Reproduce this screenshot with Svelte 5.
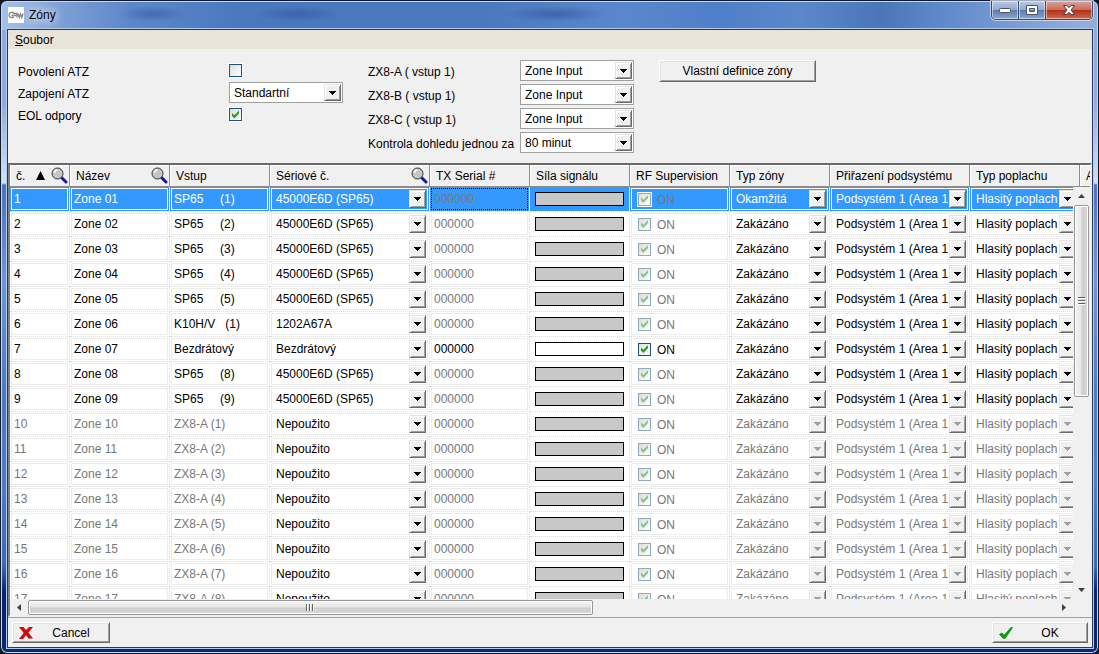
<script>
  const columns = [
    { label: 'č.', width: 60, sorted: true, search: true },
    { label: 'Název', width: 100, search: true },
    { label: 'Vstup', width: 100 },
    { label: 'Sériové č.', width: 160, search: true },
    { label: 'TX Serial #', width: 100 },
    { label: 'Síla signálu', width: 100 },
    { label: 'RF Supervision', width: 100 },
    { label: 'Typ zóny', width: 100 },
    { label: 'Přiřazení podsystému', width: 140 },
    { label: 'Typ poplachu', width: 110 },
    { label: 'A', width: 120 }
  ];

  const inputs = [
    ['SP65     (1)', '45000E6D (SP65)'],
    ['SP65     (2)', '45000E6D (SP65)'],
    ['SP65     (3)', '45000E6D (SP65)'],
    ['SP65     (4)', '45000E6D (SP65)'],
    ['SP65     (5)', '45000E6D (SP65)'],
    ['K10H/V   (1)', '1202A67A'],
    ['Bezdrátový', 'Bezdrátový'],
    ['SP65     (8)', '45000E6D (SP65)'],
    ['SP65     (9)', '45000E6D (SP65)']
  ];

  const expanders = [
    { id: 'zx8a', label: 'ZX8-A ( vstup 1)' },
    { id: 'zx8b', label: 'ZX8-B ( vstup 1)' },
    { id: 'zx8c', label: 'ZX8-C ( vstup 1)' }
  ];

  let selected = 1;
  let atzEnabled = false;
  let eolResistors = true;

  let zones = Array.from({ length: 17 }, (_, i) => {
    const no = i + 1;
    const used = i < inputs.length;
    return {
      no,
      used,
      name: 'Zone ' + String(no).padStart(2, '0'),
      input: used ? inputs[i][0] : `ZX8-A (${no - 9})`,
      serial: used ? inputs[i][1] : 'Nepoužito',
      wireless: no === 7,
      tx: '000000',
      supervised: true,
      type: no === 1 ? 'Okamžitá' : 'Zakázáno',
      area: 'Podsystém 1 (Area 1)',
      alarm: 'Hlasitý poplach'
    };
  });
</script>

{#snippet arrow()}
  <span class="arrow" aria-hidden="true">
    <svg width="7" height="4" viewBox="0 0 7 4" shape-rendering="crispEdges"><path d="M0 0h7v1H6v1H5v1H4v1H3V3H2V2H1V1H0z" /></svg>
  </span>
{/snippet}

{#snippet dropdown(id, label, value, disabled)}
  <span class="dropdown" class:off={disabled}>
    <select {id} aria-label={label} {disabled}>
      <option>{value}</option>
    </select>
    {@render arrow()}
  </span>
{/snippet}

<div class="window">
  <header class="titlebar">
    <span class="logo" aria-hidden="true">
      <svg width="16" height="16" viewBox="0 0 16 16">
        <path d="M6 5.5C3 4.6 1 6 1 8s1.800 3 4 2.600V8.500H3.500M4.500 6.500h4.500v4M6 8.500h3M10 6.500l1.300 4 1.200-3.500 1.200 3.500 1.500-4" fill="none" stroke="#858585" stroke-width="1.300" />
      </svg>
    </span>
    <h1>Zóny</h1>
    <div class="window-buttons">
      <button aria-label="Minimalizovat">
        <svg width="12" height="5" viewBox="0 0 12 5"><rect x=".5" y=".5" width="11" height="4" rx="1" fill="#fff" stroke="#4d5566" /></svg>
      </button>
      <button aria-label="Maximalizovat">
        <svg width="12" height="10" viewBox="0 0 12 10"><path fill-rule="evenodd" d="M.5.5h11v9H.5zM3.500 3.500v3h5v-3z" fill="#fff" stroke="#4d5566" /></svg>
      </button>
      <button class="close" aria-label="Zavřít">
        <svg width="12" height="10" viewBox="0 0 12 10"><path d="M.5.5h3.300L6 2.700 8.200.5h3.300L8 5l3.500 4.500H8.200L6 7.300 3.800 9.500H.5L4 5z" fill="#fff" stroke="#5b3a44" /></svg>
      </button>
    </div>
  </header>

  <div class="client">
    <nav class="menu">
      <button><u>S</u>oubor</button>
    </nav>

    <section class="settings">
      <div class="fields basic">
        <label for="atz">Povolení ATZ</label>
        <input id="atz" class="check" type="checkbox" bind:checked={atzEnabled} />
        <label for="wiring">Zapojení ATZ</label>
        {@render dropdown('wiring', undefined, 'Standartní', false)}
        <label for="eol">EOL odpory</label>
        <input id="eol" class="check" type="checkbox" bind:checked={eolResistors} />
      </div>
      <div class="fields expanders">
        {#each expanders as item (item.id)}
          <label for={item.id}>{item.label}</label>
          {@render dropdown(item.id, undefined, 'Zone Input', false)}
        {/each}
        <label for="supervision">Kontrola dohledu jednou za</label>
        {@render dropdown('supervision', undefined, '80 minut', false)}
      </div>
      <button class="push define">Vlastní definice zóny</button>
    </section>

    <div class="grid">
      <div class="viewport">
        <table>
          <colgroup>
            {#each columns as column}
              <col style="width: {column.width}px" />
            {/each}
          </colgroup>
          <thead>
            <tr>
              {#each columns as column}
                <th>
                  <div class="head">
                    <span>{column.label}</span>
                    {#if column.sorted}
                      <svg class="sort" width="9" height="9" viewBox="0 0 9 9"><path d="M4.500 0L9 9H0z" /></svg>
                    {/if}
                    {#if column.search}
                      <svg class="lens" width="17" height="17" viewBox="0 0 17 17">
                        <path d="M10.500 10.500l4.500 4.500" stroke="#1616a8" stroke-width="3" stroke-linecap="round" />
                        <circle cx="6.500" cy="6.500" r="5.500" fill="#c3c6c6" stroke="#333" />
                        <path d="M3.500 6a3 3 0 0 1 3-3" fill="none" stroke="#fff" stroke-width="1.500" />
                      </svg>
                    {/if}
                  </div>
                </th>
              {/each}
            </tr>
          </thead>
          <tbody>
            {#each zones as zone (zone.no)}
              <tr class:selected={zone.no === selected} class:unused={!zone.used} on:click={() => (selected = zone.no)}>
                <td><div class="cell">{zone.no}</div></td>
                <td><div class="cell">{zone.name}</div></td>
                <td><div class="cell">{zone.input}</div></td>
                <td><div class="cell">{@render dropdown(undefined, 'Sériové č.', zone.serial, false)}</div></td>
                <td class="tx">
                  <div class="cell"><input type="text" aria-label="TX Serial" bind:value={zone.tx} disabled={!zone.wireless} /></div>
                </td>
                <td><div class="signal" class:active={zone.wireless}></div></td>
                <td>
                  <div class="cell">
                    <label class="rf" class:off={!zone.wireless}>
                      <input class="check" type="checkbox" bind:checked={zone.supervised} disabled={!zone.wireless} />
                      <span>ON</span>
                    </label>
                  </div>
                </td>
                <td><div class="cell">{@render dropdown(undefined, 'Typ zóny', zone.type, !zone.used)}</div></td>
                <td><div class="cell">{@render dropdown(undefined, 'Přiřazení podsystému', zone.area, !zone.used)}</div></td>
                <td><div class="cell">{@render dropdown(undefined, 'Typ poplachu', zone.alarm, !zone.used)}</div></td>
                <td><div class="cell"></div></td>
              </tr>
            {/each}
          </tbody>
        </table>
      </div>

      <div class="scroll vertical" aria-hidden="true">
        <svg width="7" height="4" viewBox="0 0 7 4"><path d="M3.500 0L7 4H0z" /></svg>
        <div class="track"><div class="thumb"><i></i></div></div>
        <svg width="7" height="4" viewBox="0 0 7 4"><path d="M3.500 4L7 0H0z" /></svg>
      </div>
      <div class="scroll horizontal" aria-hidden="true">
        <svg width="4" height="7" viewBox="0 0 4 7"><path d="M0 3.500L4 0v7z" /></svg>
        <div class="track"><div class="thumb"><i></i></div></div>
        <svg width="4" height="7" viewBox="0 0 4 7"><path d="M4 3.500L0 0v7z" /></svg>
      </div>
    </div>

    <footer class="actions">
      <button class="push">
        <svg width="14" height="12" viewBox="0 0 14 12"><path d="M0 0h4.500L7 3l3-3h4L9.500 5.500 14 11.500H9.500L7 8.300 4 12H0l4.700-6z" fill="#cf0a0a" /></svg>
        <span>Cancel</span>
      </button>
      <button class="push">
        <svg width="14" height="12" viewBox="0 0 14 12"><path d="M.5 7.500l2.500-1.500 2 2.500L12 .5h1.500L6 11.500H4.500z" fill="#0a9c12" stroke="#0a9c12" /></svg>
        <span>OK</span>
      </button>
    </footer>
  </div>
</div>

<style>
  :global(body) {
    margin: 0;
    background: #10182c;
  }

  .window,
  .window button,
  .window input,
  .window select {
    font-family: 'Liberation Sans', Arial, sans-serif;
    font-size: 12px;
    color: #000;
  }

  .window {
    box-sizing: border-box;
    display: flex;
    flex-direction: column;
    height: 100vh;
    padding: 0 5px 5px 6px;
    border: 1px solid #10182c;
    border-radius: 7px;
    box-shadow: inset 0 0 0 1px #c4d8f4;
    background:
      linear-gradient(90deg, #a9c1e8 0, #7d9fd6 60px, #5c87cb 130px, #4a78bf 240px, #4a78bf 480px, #5a87cc 620px, #4f7fc9 720px, #5b88cb 800px, #4a76b8 880px, #5e89cb 940px, #93addb 1080px) top / 100% 29px no-repeat,
      linear-gradient(180deg, #8fabdc 0, #8fabdc 100px, #d3e1f5 182px, #4873bb 184px, #7097d2 280px, #4b78c0 400px, #4f7cc4 480px, #3c69b3 565px, #06296e 590px, #06296e);
  }

  button,
  select {
    cursor: default;
  }

  .titlebar {
    display: flex;
    align-items: center;
    gap: 5px;
    height: 28px;
    flex: none;
    padding-left: 1px;
    background:
      radial-gradient(ellipse 34px 8px at 145px 13px, rgba(30, 62, 125, 0.35), transparent),
      radial-gradient(ellipse 44px 8px at 290px 13px, rgba(30, 62, 125, 0.35), transparent),
      radial-gradient(ellipse 52px 8px at 548px 13px, rgba(30, 62, 125, 0.4), transparent);
  }

  .logo {
    display: flex;
    background: #fff;
  }

  h1 {
    margin: 0;
    font-size: 12px;
    font-weight: 400;
    text-shadow: 0 0 8px #fff, 0 0 12px #fff;
  }

  .window-buttons {
    display: flex;
    align-self: flex-start;
    margin-left: auto;
    border: 1px solid #3b4a68;
    border-top: 0;
    border-radius: 0 0 5px 5px;
    box-shadow: 0 0 0 1px rgba(225, 235, 250, 0.7);
    overflow: hidden;
  }

  .window-buttons button {
    display: flex;
    align-items: center;
    justify-content: center;
    width: 27px;
    height: 18px;
    padding: 0;
    border: 0;
    border-right: 1px solid #3b4a68;
    box-shadow: inset 0 0 0 1px rgba(255, 255, 255, 0.5);
    background: linear-gradient(180deg, #b9c9e4 0, #93a9cf 48%, #5f7cb0 52%, #8aa6d4 100%);
  }

  .window-buttons .close {
    width: 46px;
    border-right: 0;
    background: linear-gradient(180deg, #dca49a 0, #c96c5c 48%, #b0301c 52%, #cf6a4a 100%);
  }

  .client {
    display: flex;
    flex-direction: column;
    flex: 1;
    min-height: 0;
    border: 1px solid #26395c;
    outline: 1px solid #b3cbec;
    background: #f0f0f0;
  }

  .menu {
    flex: none;
    height: 19px;
    background: #e8e5d8;
  }

  .menu button {
    height: 19px;
    padding: 0 7px;
    border: 0;
    background: none;
  }

  .settings {
    display: flex;
    align-items: flex-start;
    gap: 25px;
    flex: none;
    padding: 11px 10px 10px;
  }

  .fields {
    display: grid;
    line-height: 24px;
    white-space: nowrap;
  }

  .basic {
    grid-template-columns: 211px 114px;
    grid-auto-rows: 22px;
  }

  .expanders {
    grid-template-columns: 152px 114px;
    grid-auto-rows: 24px;
    height: 93px;
  }

  .basic .check {
    margin-top: 4px;
  }

  .dropdown {
    display: grid;
    grid-template-columns: 1fr 17px;
    flex: 1;
    min-width: 0;
  }

  .dropdown select {
    grid-area: 1 / 1 / 2 / 3;
    min-width: 0;
    height: 20px;
    margin: 0;
    padding: 0 18px 0 4px;
    appearance: none;
    border: 0;
    border-radius: 0;
    outline: 0;
    background: transparent;
    opacity: 1;
  }

  .fields .dropdown {
    box-sizing: border-box;
    height: 21px;
    border: 1px solid #a0a0a0;
    background: #fff;
  }

  .fields .dropdown select {
    height: 19px;
  }

  .arrow {
    grid-area: 1 / 2;
    z-index: 1;
    box-sizing: border-box;
    display: flex;
    align-items: center;
    justify-content: center;
    width: 17px;
    height: 18px;
    margin-top: 1px;
    border: 1px solid #e3e3e3;
    border-right-color: #696969;
    border-bottom-color: #696969;
    box-shadow: inset 1px 1px #fff, inset -1px -1px #a0a0a0;
    background: #f0f0f0;
    pointer-events: none;
  }

  .fields .arrow {
    height: 17px;
    margin-left: -1px;
  }

  .off .arrow path {
    fill: #a0a0a0;
  }

  .check {
    appearance: none;
    box-sizing: border-box;
    flex: none;
    width: 13px;
    height: 13px;
    margin: 0;
    border: 1px solid #1c5180;
    outline: 1px solid #fff;
    background: linear-gradient(135deg, #dcdcd7, #fff);
  }

  .check:checked::before {
    content: '';
    display: block;
    width: 11px;
    height: 11px;
    background: #21a121;
    clip-path: polygon(18% 36%, 40% 56%, 82% 14%, 82% 42%, 40% 86%, 18% 64%);
  }

  .check:disabled {
    border-color: #8ea8c0;
  }

  .check:disabled::before {
    opacity: 0.5;
  }

  .push {
    display: flex;
    align-items: center;
    box-sizing: border-box;
    height: 21px;
    padding: 0 6px;
    border: 1px solid #fff;
    border-right-color: #696969;
    border-bottom-color: #696969;
    border-radius: 0;
    box-shadow: inset 1px 1px #e3e3e3, inset -1px -1px #a0a0a0;
    background: #f0f0f0;
  }

  .define {
    justify-content: center;
    width: 157px;
    height: 22px;
  }

  .grid {
    display: grid;
    grid-template-columns: minmax(0, 1fr) 17px;
    grid-template-rows: 22px minmax(0, 1fr) 16px;
    flex: 1;
    min-height: 0;
    border: 2px solid #808080;
    border-color: #696969 #f0f0f0 #f0f0f0 #808080;
    background: #fff;
  }

  .viewport {
    grid-area: 1 / 1 / 3 / 3;
    overflow: hidden;
  }

  table {
    width: 1190px;
    table-layout: fixed;
    border-collapse: separate;
    border-spacing: 0;
    white-space: pre;
  }

  th {
    box-sizing: border-box;
    height: 22px;
    padding: 0;
    border-right: 1px solid #8c8c8c;
    border-bottom: 1px solid #8c8c8c;
    box-shadow: inset 1px 1px #fff;
    background: #f0f0f0;
    font-weight: 400;
  }

  .head {
    display: flex;
    align-items: center;
    height: 21px;
    padding: 0 1px 0 6px;
  }

  .sort {
    margin-left: 11px;
  }

  .lens {
    margin-left: auto;
  }

  td {
    box-sizing: border-box;
    height: 25px;
    padding: 0;
    border-right: 1px dotted #dcdcdc;
    border-bottom: 1px dotted #dcdcdc;
    background-clip: padding-box;
  }

  .cell {
    display: flex;
    align-items: center;
    box-sizing: border-box;
    height: 22px;
    margin: 1px;
    padding: 0 1px 0 2px;
    border: 1px solid #ececec;
  }

  .cell:has(.dropdown) {
    padding-left: 0;
  }

  .tx input {
    width: 100%;
    padding: 0;
    border: 0;
    outline: 0;
    background: transparent;
  }

  .window .tx input:disabled,
  .rf.off,
  .unused td,
  .window .unused select:disabled {
    color: #787878;
  }

  .signal {
    box-sizing: border-box;
    height: 14px;
    margin: 0 5px;
    border: 1px solid #000;
    background: #c8c8c8;
  }

  .signal.active {
    background: #fff;
  }

  .rf {
    display: flex;
    align-items: center;
    gap: 6px;
    padding-left: 4px;
  }

  .rf span {
    padding-top: 2px;
  }

  .selected td {
    background-color: #3399ff;
  }

  .selected .cell {
    border-color: #fff;
  }

  .selected .cell:not(:has(.rf)),
  .window .selected select {
    color: #fff;
  }

  .selected .tx .cell {
    border: 1px dotted #000;
  }

  .scroll {
    display: flex;
    align-items: center;
    background: #f0f0f0;
  }

  .scroll > svg {
    flex: none;
    fill: #404040;
  }

  .track {
    display: flex;
    flex: 1;
  }

  .thumb {
    display: flex;
    align-items: center;
    justify-content: center;
    box-sizing: border-box;
    border: 1px solid #979797;
    border-radius: 2px;
    box-shadow: inset 0 0 0 1px #fff;
  }

  .vertical {
    grid-area: 2 / 2;
    z-index: 2;
    flex-direction: column;
    gap: 7px;
    padding: 7px 0;
  }

  .vertical .track {
    flex-direction: column;
    width: 15px;
  }

  .vertical .thumb {
    height: 51%;
    background: linear-gradient(90deg, #f5f5f5 0, #e6e6e6 48%, #cfcfcf 52%, #d6d6d6);
  }

  .vertical i {
    width: 7px;
    height: 8px;
    background: repeating-linear-gradient(180deg, #606060 0 1px, #fff 1px 2px, transparent 2px 3px);
  }

  .horizontal {
    grid-area: 3 / 1 / 4 / 3;
    gap: 7px;
    padding: 0 24px 0 7px;
  }

  .horizontal .track {
    height: 15px;
  }

  .horizontal .thumb {
    width: 55%;
    background: linear-gradient(180deg, #f5f5f5 0, #e6e6e6 48%, #cfcfcf 52%, #d6d6d6);
  }

  .horizontal i {
    width: 8px;
    height: 7px;
    background: repeating-linear-gradient(90deg, #606060 0 1px, #fff 1px 2px, transparent 2px 3px);
  }

  .actions {
    display: flex;
    justify-content: space-between;
    flex: none;
    padding: 4px 4px;
    border-top: 1px solid #a0a0a0;
  }

  .actions .push {
    width: 98px;
  }

  .actions .push:last-child {
    width: 96px;
  }

  .actions span {
    flex: 1;
    padding-left: 6px;
    text-align: center;
  }
</style>
